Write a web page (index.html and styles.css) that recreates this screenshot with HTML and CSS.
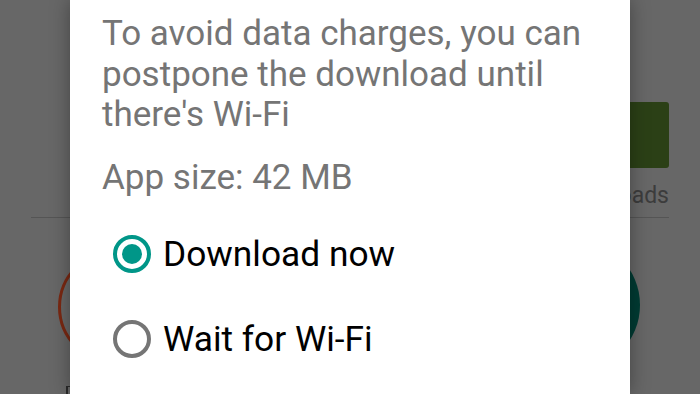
FILE: index.html
```html
<!DOCTYPE html>
<html>
<head>
<meta charset="utf-8">
<link rel="stylesheet" href="styles.css">
</head>
<body>
<div class="stage">
  <div class="backdrop">
    <div class="install-btn"></div>
    <div class="downloads-label">Downloads</div>
    <div class="divider"></div>
    <div class="badge badge-red"></div>
    <div class="badge badge-teal"></div>
    <div class="caption-stub"></div>
  </div>
  <div class="dialog">
    <p class="message">To avoid data charges, you can postpone the download until there's Wi-Fi</p>
    <p class="app-size">App size: 42 MB</p>
    <div class="options">
      <div class="option">
        <span class="radio radio-on"><span class="radio-dot"></span></span>
        <span class="option-label">Download now</span>
      </div>
      <div class="option">
        <span class="radio"></span>
        <span class="option-label">Wait for Wi-Fi</span>
      </div>
    </div>
  </div>
</div>
</body>
</html>
```
FILE: styles.css
```css
html, body {
  margin: 0;
  padding: 0;
}
body {
  font-family: Roboto, "Noto Sans", sans-serif;
  width: 700px;
  height: 394px;
  overflow: hidden;
}
.stage {
  position: relative;
  width: 700px;
  height: 394px;
  background: #676767;
  overflow: hidden;
  display: flex;
  justify-content: center;
}
.backdrop {
  position: absolute;
  inset: 0;
}
.install-btn {
  position: absolute;
  left: 520px;
  top: 102px;
  width: 149px;
  height: 66px;
  background: #2b4016;
  border-radius: 3px;
}
.downloads-label {
  position: absolute;
  right: 31px;
  top: 181px;
  font-size: 23px;
  color: #3c3c3c;
  line-height: 30px;
}
.divider {
  position: absolute;
  left: 31px;
  right: 31px;
  top: 217px;
  height: 1px;
  background: #555555;
}
.badge {
  position: absolute;
  border-radius: 50%;
  box-sizing: border-box;
}
.badge-red {
  left: 58px;
  top: 250px;
  width: 114px;
  height: 114px;
  border: 3px solid #7a2812;
}
.badge-teal {
  left: 508px;
  top: 239px;
  width: 132px;
  height: 132px;
  background: #003b33;
}
.caption-stub {
  position: absolute;
  left: 66px;
  top: 386px;
  width: 4px;
  height: 8px;
  border-left: 2px solid #2a2a2a;
  border-top: 1px solid #2a2a2a;
  box-sizing: border-box;
}
.dialog {
  position: relative;
  width: 560px;
  height: 394px;
  background: #ffffff;
  box-shadow: 0 0 18px rgba(0, 0, 0, 0.35);
  box-sizing: border-box;
  padding: 14px 24px 0 32px;
}
.message {
  margin: 0;
  font-size: 35px;
  line-height: 40.5px;
  color: #757575;
}
.app-size {
  margin: 22.5px 0 0;
  font-size: 35px;
  line-height: 40.5px;
  color: #757575;
}
.options {
  margin-top: 13px;
  display: flex;
  flex-direction: column;
}
.option {
  height: 85px;
  display: flex;
  align-items: center;
  gap: 12px;
  padding-left: 11px;
}
.radio {
  width: 38px;
  height: 38px;
  box-sizing: border-box;
  border: 4px solid #757575;
  border-radius: 50%;
  display: flex;
  align-items: center;
  justify-content: center;
  flex: none;
}
.radio-on {
  border-color: #009688;
}
.radio-dot {
  width: 20px;
  height: 20px;
  border-radius: 50%;
  background: #009688;
}
.option-label {
  font-size: 35.3px;
  color: #000000;
  line-height: 40px;
}
```
